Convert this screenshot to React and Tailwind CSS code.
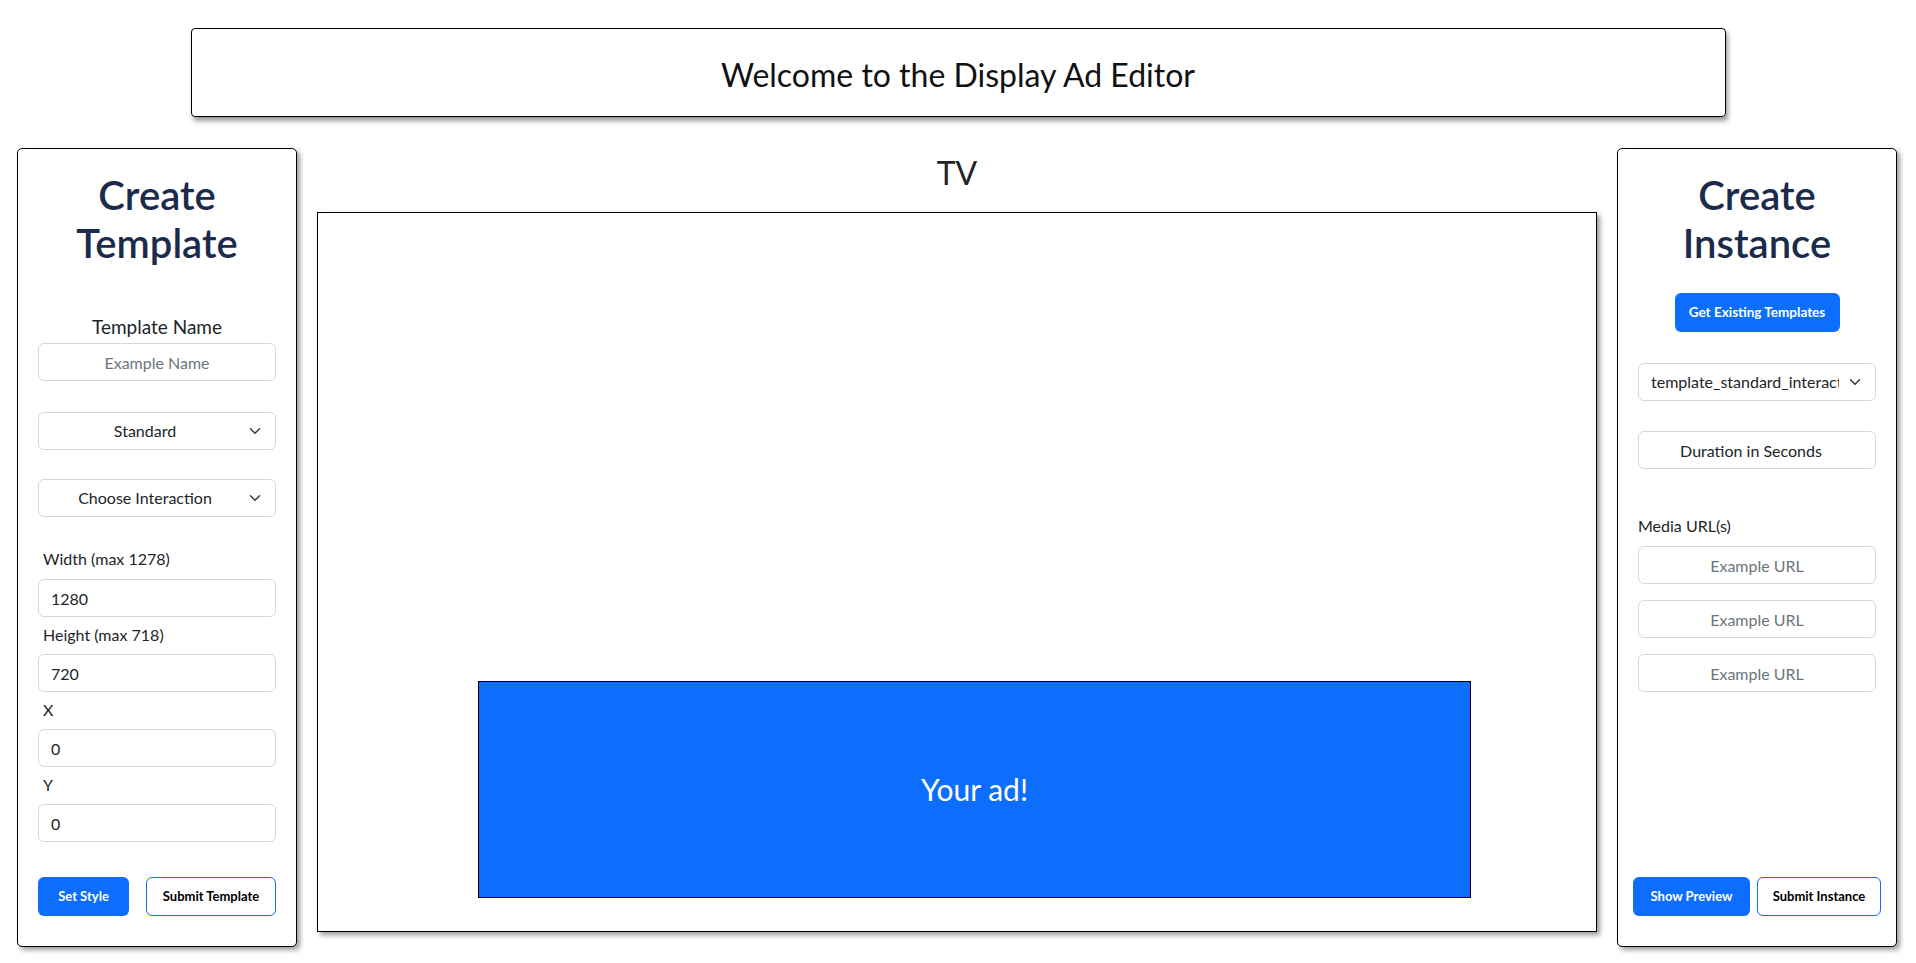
const font = "font-['Lato','Noto_Sans',sans-serif]"

function Chevron() {
  return (
    <svg className="w-[12px] h-[12px] absolute right-[14px] top-1/2 -translate-y-1/2" viewBox="0 0 16 16" fill="none" stroke="#343a40" strokeLinecap="round" strokeLinejoin="round" strokeWidth={2}>
      <path d="m2 5 6 6 6-6" />
    </svg>
  )
}

function Select({ children, className = '', left = false }) {
  return (
    <div className={`relative h-[38px] w-full border border-[#d3d9df] rounded-[6px] bg-white flex items-center pl-[12px] pr-[36px] text-[16px] text-[#212529] ${className}`}>
      <span className={`w-full overflow-hidden whitespace-nowrap ${left ? 'text-left' : 'text-center'}`}>{children}</span>
      <Chevron />
    </div>
  )
}

function Field({ className = '', placeholder, value, center = false }) {
  return (
    <input
      readOnly
      defaultValue={value}
      placeholder={placeholder}
      className={`block h-[38px] w-full border border-[#d3d9df] rounded-[6px] bg-white px-[12px] text-[16px] text-[#212529] placeholder:text-[#6c757d] outline-none ${center ? 'text-center' : ''} ${className}`}
    />
  )
}

const panel = 'w-[280px] h-[799px] shrink-0 bg-white border border-black rounded-[5px] shadow-[3px_3px_5px_rgba(0,0,0,0.4)] flex flex-col px-[20px] pt-[22px] pb-[30px]'
const title = 'text-[40px] leading-[48px] font-semibold text-center text-[#1b2b4b]'

export default function App() {
  return (
    <div className={`min-h-screen bg-white text-[#212529] ${font}`}>
      <div className="pt-[28px]">
        <div className="w-[1535px] h-[89px] mx-auto border border-black rounded-[4px] shadow-[2px_4px_5px_rgba(0,0,0,0.4)] flex items-center justify-center pt-[4px] text-[32px] text-[#111]">
          Welcome to the Display Ad Editor
        </div>
      </div>

      <div className="flex pl-[17px] gap-[20px] mt-[31px]">
        {/* Create Template */}
        <div className={panel}>
          <h1 className={title}>Create<br />Template</h1>
          <div className="mt-[46px] text-center text-[19px] leading-[28px]">Template Name</div>
          <Field className="mt-[2px]" placeholder="Example Name" center />
          <Select className="mt-[31px]">Standard</Select>
          <Select className="mt-[29px]">Choose Interaction</Select>
          <label className="mt-[30px] pl-[5px] leading-[24px]">Width (max 1278)</label>
          <Field className="mt-[8px]" value="1280" />
          <label className="mt-[6px] pl-[5px] leading-[24px]">Height (max 718)</label>
          <Field className="mt-[7px]" value="720" />
          <label className="mt-[6px] pl-[5px] leading-[24px]">X</label>
          <Field className="mt-[7px]" value="0" />
          <label className="mt-[6px] pl-[5px] leading-[24px]">Y</label>
          <Field className="mt-[7px]" value="0" />
          <div className="mt-auto flex justify-between">
            <button className="w-[91px] h-[39px] rounded-[6px] bg-[#0d6efd] text-white text-[13px] font-bold">Set Style</button>
            <button className="w-[130px] h-[39px] rounded-[6px] border border-[#0d6efd] bg-white text-black text-[13px] font-bold">Submit Template</button>
          </div>
        </div>

        {/* TV preview */}
        <div className="w-[1280px] shrink-0 flex flex-col">
          <h2 className="mt-[6px] h-[38px] text-[32px] leading-[38px] text-center">TV</h2>
          <div className="mt-[20px] relative w-[1280px] h-[720px] border border-black bg-white shadow-[3px_3px_5px_rgba(0,0,0,0.4)]">
            <div className="absolute left-[160px] top-[468px] w-[993px] h-[217px] bg-[#0d6efd] border border-black flex items-center justify-center text-white text-[30px]">
              Your ad!
            </div>
          </div>
        </div>

        {/* Create Instance */}
        <div className={panel}>
          <h1 className={title}>Create<br />Instance</h1>
          <button className="mt-[26px] self-center w-[165px] h-[39px] rounded-[6px] bg-[#0d6efd] text-white text-[13.5px] font-bold">Get Existing Templates</button>
          <Select className="mt-[31px]" left>template_standard_interactive</Select>
          <Field className="mt-[30px] pr-[24px]" value="Duration in Seconds" center />
          <label className="mt-[45px] leading-[24px]">Media URL(s)</label>
          <Field className="mt-[8px]" placeholder="Example URL" center />
          <Field className="mt-[16px]" placeholder="Example URL" center />
          <Field className="mt-[16px]" placeholder="Example URL" center />
          <div className="mt-auto -mx-[5px] flex justify-center gap-[7px]">
            <button className="w-[117px] h-[39px] rounded-[6px] bg-[#0d6efd] text-white text-[13px] font-bold">Show Preview</button>
            <button className="w-[124px] h-[39px] rounded-[6px] border border-[#0d6efd] bg-white text-black text-[13px] font-bold">Submit Instance</button>
          </div>
        </div>
      </div>
    </div>
  )
}
